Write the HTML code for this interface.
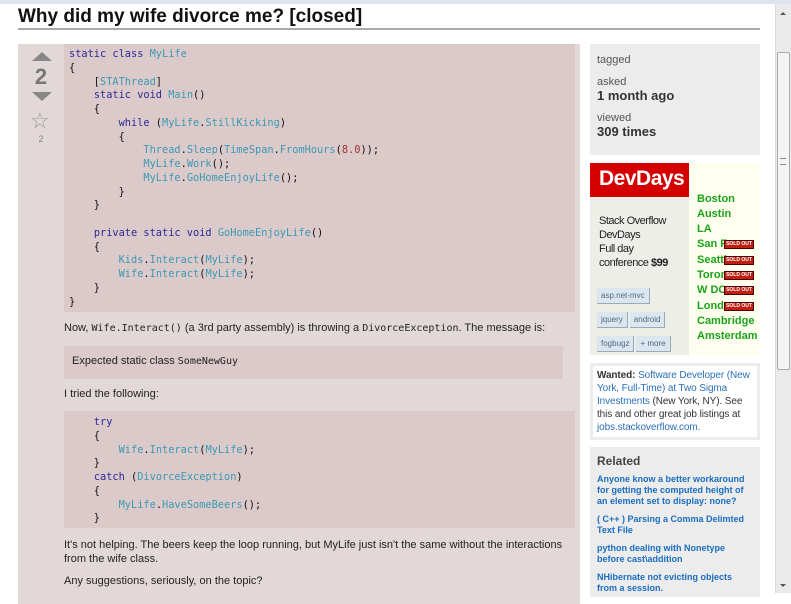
<!DOCTYPE html>
<html><head><style>
*{margin:0;padding:0;box-sizing:border-box}
body{width:791px;height:593px;overflow:hidden;background:#fff;font-family:"Liberation Sans",Arial,sans-serif;position:relative;color:#222}
.top{position:absolute;left:0;top:0;width:791px;height:4px;background:#dde4ee}
h1{position:absolute;left:18px;top:6px;font-size:19px;font-weight:bold;color:#111}
.hr{position:absolute;left:18px;top:28px;width:742px;height:2px;background:#a9a9a9}
.q{position:absolute;left:18px;top:44px;width:562px;height:560px;background:#e2d8d8}
.code{position:absolute;background:#dccaca;font-family:"DejaVu Sans Mono","Liberation Mono",monospace;font-size:10.3px;line-height:13.75px;white-space:pre;color:#111}
.k{color:#2a2a9a}.t{color:#3a9ab5}.n{color:#a03030}
.p{position:absolute;left:64px;font-size:11px;color:#222}
.m{font-family:"DejaVu Sans Mono",monospace;font-size:10px}
.side{position:absolute;left:590px;width:170px}
.lab{font-size:11px;color:#555}
.big{font-size:13px;font-weight:bold;color:#333}
.ct{position:absolute;left:697px;font-size:11px;font-weight:bold;color:#1aa31a;white-space:nowrap}
.so{position:absolute;left:724px;background:#c02010;color:#fff;font-size:5px;font-weight:bold;width:30px;height:9px;line-height:7px;text-align:center;border:1px solid #500;white-space:nowrap;overflow:hidden}
.tag{display:inline-block;background:#dce6ee;border-right:1px solid #9ab;border-bottom:1px solid #9ab;color:#4a6a8a;font-size:8px;padding:3px 4px;margin:0 2px 5px 0}
.rel a{display:block;color:#1a6ec0;font-weight:bold;font-size:9px;line-height:11px;margin-bottom:7px;text-decoration:none}
</style></head><body>
<div class="top"></div>
<h1>Why did my wife divorce me? [closed]</h1>
<div class="hr"></div>
<div class="q"></div>
<div style="position:absolute;left:32px;top:52px;width:0;height:0;border-left:10px solid transparent;border-right:10px solid transparent;border-bottom:9px solid #888"></div>
<div style="position:absolute;left:18px;top:64px;width:46px;text-align:center;font-size:22px;font-weight:bold;color:#777">2</div>
<div style="position:absolute;left:32px;top:92px;width:0;height:0;border-left:10px solid transparent;border-right:10px solid transparent;border-top:9px solid #888"></div>
<div style="position:absolute;left:30px;top:109px;font-size:22px;color:#999;line-height:24px">☆</div>
<div style="position:absolute;left:18px;top:134px;width:46px;text-align:center;font-size:9px;color:#888">2</div>
<div class="code" style="left:64px;top:44px;width:511px;height:268px;padding:4px 5px"><span class="k">static class</span> <span class="t">MyLife</span>
{
    [<span class="t">STAThread</span>]
    <span class="k">static void</span> <span class="t">Main</span>()
    {
        <span class="k">while</span> (<span class="t">MyLife</span>.<span class="t">StillKicking</span>)
        {
            <span class="t">Thread</span>.<span class="t">Sleep</span>(<span class="t">TimeSpan</span>.<span class="t">FromHours</span>(<span class="n">8.0</span>));
            <span class="t">MyLife</span>.<span class="t">Work</span>();
            <span class="t">MyLife</span>.<span class="t">GoHomeEnjoyLife</span>();
        }
    }

    <span class="k">private static void</span> <span class="t">GoHomeEnjoyLife</span>()
    {
        <span class="t">Kids</span>.<span class="t">Interact</span>(<span class="t">MyLife</span>);
        <span class="t">Wife</span>.<span class="t">Interact</span>(<span class="t">MyLife</span>);
    }
}</div>
<div class="p" style="top:322px">Now, <span class="m">Wife.Interact()</span> (a 3rd party assembly) is throwing a <span class="m">DivorceException</span>. The message is:</div>
<div style="position:absolute;left:64px;top:346px;width:499px;height:33px;background:#dccaca"></div>
<div class="p" style="top:355px;left:72px">Expected static class <span class="m">SomeNewGuy</span></div>
<div class="p" style="top:388px">I tried the following:</div>
<div class="code" style="left:64px;top:411px;width:511px;height:117px;padding:5px 5px"><span class="k">    try</span>
    {
        <span class="t">Wife</span>.<span class="t">Interact</span>(<span class="t">MyLife</span>);
    }
    <span class="k">catch</span> (<span class="t">DivorceException</span>)
    {
        <span class="t">MyLife</span>.<span class="t">HaveSomeBeers</span>();
    }</div>
<div class="p" style="top:538px;line-height:14px;width:510px">It's not helping. The beers keep the loop running, but MyLife just isn't the same without the interactions from the wife class.</div>
<div class="p" style="top:575px">Any suggestions, seriously, on the topic?</div>

<div class="side" style="top:44px;height:111px;background:#ececec;padding:10px 7px">
<div class="lab">tagged</div>
<div class="lab" style="margin-top:10px">asked</div>
<div class="big">1 month ago</div>
<div class="lab" style="margin-top:9px">viewed</div>
<div class="big">309 times</div>
</div>
<div class="side" style="top:163px;height:192px;background:#fffff0"></div>
<div style="position:absolute;left:590px;top:163px;width:99px;height:192px;background:#eeeee8"></div>
<div style="position:absolute;left:590px;top:163px;width:99px;height:34px;background:#d40000;color:#fff;font-size:21px;font-weight:bold;padding:4px 0 0 9px;letter-spacing:-0.5px">DevDays</div>
<div style="position:absolute;left:599px;top:214px;font-size:11px;line-height:14px;color:#222;letter-spacing:-0.5px">Stack Overflow<br>DevDays<br>Full day<br>conference <b>$99</b></div>
<div style="position:absolute;left:597px;top:285px;width:90px"><span class="tag">asp.net-mvc</span><br><span class="tag">jquery</span><span class="tag">android</span><br><span class="tag">fogbugz</span><span class="tag">+ more</span></div>
<div class="ct" style="top:193px">Boston</div>
<div class="ct" style="top:208px">Austin</div>
<div class="ct" style="top:223px">LA</div>
<div class="ct" style="top:238px">San F</div>
<div class="ct" style="top:254px">Seattl</div>
<div class="ct" style="top:269px">Toron</div>
<div class="ct" style="top:284px">W DC</div>
<div class="ct" style="top:300px">Londo</div>
<div class="ct" style="top:315px">Cambridge</div>
<div class="ct" style="top:330px">Amsterdam</div>
<div class="so" style="top:240px">SOLD OUT</div>
<div class="so" style="top:256px">SOLD OUT</div>
<div class="so" style="top:271px">SOLD OUT</div>
<div class="so" style="top:286px">SOLD OUT</div>
<div class="so" style="top:302px">SOLD OUT</div>
<div class="side" style="top:363px;height:77px;background:#fff;border:3px solid #ececec;padding:3px 3px 0 4px;font-size:10px;line-height:13px;color:#333;letter-spacing:-0.1px"><b>Wanted:</b> <span style="color:#2a70b8">Software Developer (New York, Full-Time) at Two Sigma Investments</span> (New York, NY). See this and other great job listings at <span style="color:#2a70b8">jobs.stackoverflow.com.</span></div>
<div class="side rel" style="top:447px;height:150px;background:#ececec;padding:7px 7px">
<div style="font-size:12px;font-weight:bold;color:#444;margin-bottom:6px">Related</div>
<a>Anyone know a better workaround for getting the computed height of an element set to display: none?</a>
<a>( C++ ) Parsing a Comma Delimted Text File</a>
<a>python dealing with Nonetype before cast\addition</a>
<a>NHibernate not evicting objects from a session.</a>
</div>
<div style="position:absolute;left:775px;top:4px;width:16px;height:589px;background:#eaeaea;border-left:1px solid #ddd"></div>
<div style="position:absolute;left:777px;top:52px;width:13px;height:318px;background:#f4f4f4;border:1px solid #aaa;border-radius:2px"></div>
<div style="position:absolute;left:780px;top:158px;width:6px;height:7px;border-top:1px solid #888;border-bottom:1px solid #888"></div>
<div style="position:absolute;left:780px;top:12px;width:0;height:0;border-left:3px solid transparent;border-right:3px solid transparent;border-bottom:3px solid #555"></div>
<div style="position:absolute;left:780px;top:584px;width:0;height:0;border-left:3px solid transparent;border-right:3px solid transparent;border-top:3px solid #555"></div>
</body></html>
